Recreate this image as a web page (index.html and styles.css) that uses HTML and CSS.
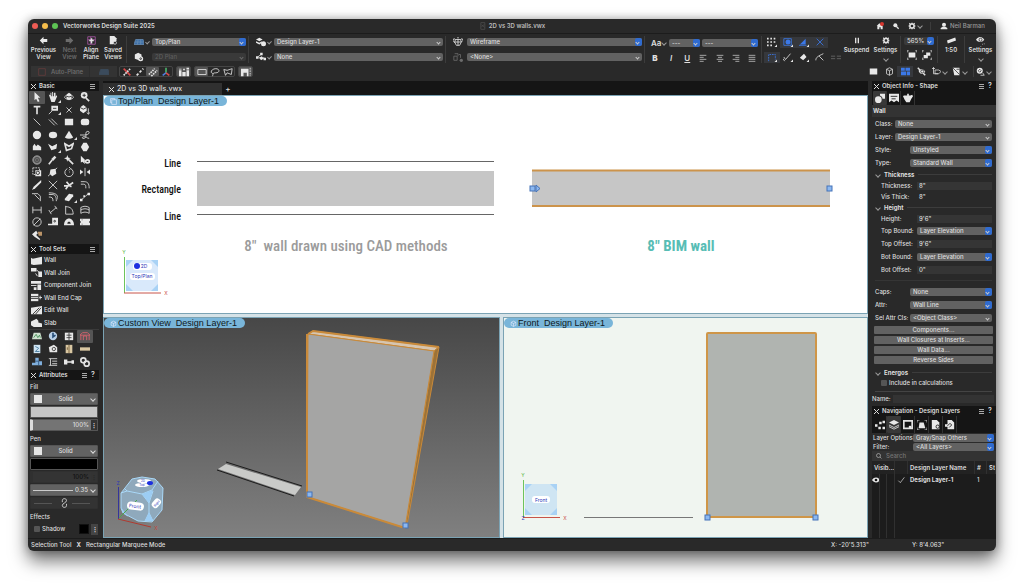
FILE: index.html
```html
<!DOCTYPE html>
<html lang="en">
<head>
    <meta charset="UTF-8">
    <meta name="viewport" content="width=device-width, initial-scale=1.0">
    <title>2D vs 3D walls.vwx</title>
    <link rel="stylesheet" href="styles.css">
</head>
<body>
<div class="window">
    <header class="titlebar">
        <div class="lights"><i class="red"></i><i class="yellow"></i><i class="green"></i></div>
        <span class="app-name">Vectorworks Design Suite 2025</span>
        <span class="doc-name"><svg viewBox="0 0 12 12"><path d="M3 1h6v10H3zM4 7l4-3M4 4l4 4"/></svg>2D vs 3D walls.vwx</span>
        <div class="title-tools">
            <button aria-label="Home"><svg viewBox="0 0 12 12"><path class="s" d="M1 6l4-4 5 4v5H7V8H5v3H2V6z"/><circle cx="9" cy="3" r="3" fill="#d8372f" stroke="none"/></svg></button>
            <button aria-label="Search"><svg viewBox="0 0 12 12"><circle class="s" cx="5" cy="5" r="3"/><path stroke-width="2" d="M6 6l4 4"/></svg></button>
            <button class="drop" aria-label="Preferences"><svg viewBox="0 0 12 12"><circle cx="6" cy="6" r="3" stroke-width="2"/><path stroke-width="2" d="M6 1v2M6 9v2M1 6h2M9 6h2M2 2l2 2M8 8l2 2M10 2L8 4M4 8l-2 2"/></svg></button>
        </div>
        <div class="user"><svg viewBox="0 0 12 12"><circle class="s" cx="6" cy="4" r="3"/><path class="s" d="M1 11V9l3-2h4l3 2v2z"/></svg>Neil Barman</div>
    </header>

    <div class="toolbar">
        <div class="group nav">
            <button><svg viewBox="0 0 12 12"><path class="s" d="M1 6l5-5v3h5v4H6v3z"/></svg>Previous<br>View</button>
            <button disabled><svg viewBox="0 0 12 12"><path class="s" d="M11 6L6 1v3H1v4h5v3z"/></svg>Next<br>View</button>
            <button><svg viewBox="0 0 12 12"><path stroke="#b45bb0" d="M1 1h10v10H1zM1 5h10M5 1v10"/><path stroke-width="2" d="M6 3v7M3 6h6"/></svg>Align<br>Plane</button>
            <button class="menu"><svg viewBox="0 0 12 12"><path class="s" d="M1 0h6l3 3v3l-4 5H1z"/><circle cx="8" cy="9" r="2" fill="#292929"/></svg>Saved<br>Views</button>
        </div>
        <div class="group pair">
            <button class="drop" aria-label="Plane"><svg viewBox="0 0 12 12"><path fill="#3d6fa8" stroke="#6489b0" d="M2 3h9l1 6H0zM1 6h10M5 3L4 9M8 3v6"/></svg></button>
            <span class="combo blue"><select aria-label="Standard view"><option>Top/Plan</option></select></span>
            <button aria-label="3D view"><svg viewBox="0 0 12 12"><path class="s" d="M1 3l4-2 4 2v3l-3 4-5-2z"/><circle class="s" cx="8" cy="8" r="3"/><circle cx="8" cy="8" r="1" stroke="#292929"/></svg></button>
            <span class="combo off"><select aria-label="Projection" disabled><option>2D Plan</option></select></span>
        </div>
        <div class="group pair">
            <button class="drop" aria-label="Layers"><svg viewBox="0 0 12 12"><path class="s" d="M0 3l4-2 4 2-4 2zM0 5l4 2 3-2v2L4 9 0 7z"/><circle class="s" cx="9" cy="8" r="3"/></svg></button>
            <span class="combo"><select aria-label="Active layer"><option>Design Layer-1</option></select></span>
            <button class="drop" aria-label="Classes"><svg viewBox="0 0 12 12"><path class="s" d="M0 5h3v3H0zM5 1h3v3H5zM4 7l3-2 2 3-3 2zM9 7h3v3H9z"/><path d="M2 6l4-3M3 7h7"/></svg></button>
            <span class="combo"><select aria-label="Active class"><option>None</option></select></span>
        </div>
        <div class="group pair render">
            <button aria-label="Render mode"><svg viewBox="0 0 12 12"><path d="M3 3h6l1 3-2 4H4L2 6zM3 3L1 2 0 4l2 3M9 3l2-1 1 2-2 2M2 6h8M6 3v7M5 1h2"/></svg></button>
            <span class="combo blue"><select aria-label="Render"><option>Wireframe</option></select></span>
            <button aria-label="Data visualization" disabled><svg viewBox="0 0 12 12"><path d="M1 5h4v5H1zM2 2h4v3M7 3h2v4"/><circle class="s" cx="10" cy="10" r="2"/></svg></button>
            <span class="combo"><select aria-label="Visualization"><option>&lt;None&gt;</option></select></span>
        </div>
        <div class="group text">
            <div class="line">
                <button class="aa drop">Aa</button>
                <span class="combo blue size"><select aria-label="Font size"><option>---</option></select></span>
                <span class="combo blue font"><select aria-label="Font"><option>---</option></select></span>
            </div>
            <div class="line spread">
                <button class="letter"><b>B</b></button>
                <button class="letter"><i>I</i></button>
                <button class="letter"><u>U</u></button>
                <button aria-label="Left"><svg viewBox="0 0 12 12"><path d="M1 2h10M1 5h6M1 8h10M1 11h6"/></svg></button>
                <button aria-label="Center"><svg viewBox="0 0 12 12"><path d="M1 2h10M3 5h6M1 8h10M3 11h6"/></svg></button>
                <button aria-label="Right"><svg viewBox="0 0 12 12"><path d="M1 2h10M5 5h6M1 8h10M5 11h6"/></svg></button>
                <button aria-label="Justify"><svg viewBox="0 0 12 12"><path d="M1 2h10M1 5h10M1 8h10M1 11h10"/></svg></button>
            </div>
        </div>
        <div class="group snaps">
            <button aria-label="Snap to grid"><svg viewBox="0 0 12 12"><path stroke-dasharray="2 2" stroke-width="2" d="M0 2h10M0 6h10M0 10h7"/><path class="s" d="M12 9v3H9z"/></svg></button>
            <button class="on" aria-label="Snap to object"><svg viewBox="0 0 12 12"><path d="M1 2h9v8H1z"/><circle class="s" cx="6" cy="6" r="3"/><path class="s w" d="M12 9v3H9z"/></svg></button>
            <button class="on" aria-label="Snap to angle"><svg viewBox="0 0 12 12"><path class="s" d="M1 9l7-7v7z"/><path d="M0 10h9"/><path class="s w" d="M12 9v3H9z"/></svg></button>
            <button class="on" aria-label="Snap to intersection"><svg viewBox="0 0 12 12"><path d="M2 2l8 8M10 2l-8 8"/></svg></button>
            <span></span>
            <button class="on" aria-label="Smart points"><svg viewBox="0 0 12 12"><path stroke-dasharray="2 1" d="M2 11V3h8v6"/><path class="s w" d="M12 9v3H9z"/></svg></button>
            <button aria-label="Snap to distance"><svg viewBox="0 0 12 12"><path d="M1 6l2 3 6-7M0 8l2 3"/><path class="s" d="M12 9v3H9z"/></svg></button>
            <button aria-label="Smart edge"><svg viewBox="0 0 12 12"><path class="s" d="M1 7l5-5 3 4-4 4zM12 9v3H9z"/></svg></button>
            <button aria-label="Tangent snap"><svg viewBox="0 0 12 12"><path d="M1 10c0-4 3-5 9-8M5 5l5 5"/></svg></button>
            <button aria-label="Working plane" disabled><svg viewBox="0 0 12 12"><path d="M0 5h5M7 5h5M0 8h5M7 8h5"/></svg></button>
        </div>
        <div class="group duo">
            <button><svg viewBox="0 0 12 12"><path stroke-width="2" d="M4 2v8M8 2v8"/></svg>Suspend</button>
            <button class="menu"><svg viewBox="0 0 12 12"><circle cx="6" cy="6" r="3" stroke-width="2"/><path stroke-width="2" d="M6 1v2M6 9v2M1 6h2M9 6h2M2 2l2 2M8 8l2 2M10 2L8 4M4 8l-2 2"/></svg>Settings</button>
        </div>
        <div class="group zoom">
            <span class="combo blue"><select aria-label="Zoom"><option>565%</option></select></span>
            <div class="line">
                <button aria-label="Fit to page"><svg viewBox="0 0 12 12"><path class="s" d="M2 3h8v6H2z"/><path d="M0 3V1h2M10 1h2v2M0 9v2h2M10 11h2V9"/></svg></button>
                <button aria-label="Fit to objects"><svg viewBox="0 0 12 12"><path class="s" d="M5 3h5v4H7v3H2V6h3z"/><path d="M0 3V1h2M10 1h2v2M0 9v2h2M10 11h2V9"/></svg></button>
            </div>
        </div>
        <div class="group single">
            <button><svg viewBox="0 0 12 12"><path class="s" d="M0 6l11-4 1 4L1 10z"/></svg>1:50</button>
        </div>
        <div class="group single">
            <button class="menu"><svg viewBox="0 0 12 12"><path class="s" d="M0 5c3-5 8-5 11 0-3 4-8 4-11 0z"/><circle cx="6" cy="5" r="2" stroke="#292929"/><path d="M8 11h1M11 10v1"/></svg>Settings</button>
        </div>
    </div>

    <div class="modes">
        <div class="auto-plane"><button disabled><svg viewBox="0 0 12 12"><path stroke="#b84a4a" d="M2 2h8v8H2z"/></svg>Auto-Plane</button><button disabled aria-label="Plane"><svg viewBox="0 0 12 12"><path fill="#4a78a8" stroke="#4a78a8" d="M2 3h9l1 6H0z"/></svg></button></div>
        <div class="mode-set">
            <button aria-label="Disable scaling"><svg viewBox="0 0 12 12"><path stroke="#d84a4a" stroke-width="2" d="M2 2l8 8"/><path stroke-dasharray="2 1" stroke-width="2" d="M2 10l8-8"/></svg></button>
            <button aria-label="Single scaling"><svg viewBox="0 0 12 12"><path stroke-dasharray="3 2" stroke-width="2" d="M2 10l8-8"/></svg></button>
            <button class="sel" aria-label="Multiple scaling"><svg viewBox="0 0 12 12"><path stroke-dasharray="2 1" stroke-width="2" d="M1 9l7-7M4 11l7-7"/></svg></button>
            <button aria-label="Axes"><svg viewBox="0 0 12 12"><path stroke="#4ab36a" stroke-width="2" d="M6 7V1"/><path stroke="#4a80e0" stroke-width="2" d="M6 7l-4 3"/><path stroke="#d84a4a" stroke-width="2" d="M6 7l4 3"/></svg></button>
        </div>
        <div class="mode-set"><button class="sel" aria-label="Wall insertion"><svg viewBox="0 0 12 12"><path class="s" d="M0 4h3v7H0zM4 6h4v5H4zM9 4h3v7H9zM0 2h3v1H0zM5 2h2v2H5zM9 1h3v2H9z"/></svg></button></div>
        <div class="mode-set">
            <button class="sel" aria-label="Rectangular marquee"><svg viewBox="0 0 12 12"><path d="M1 3h10v6H1z"/></svg></button>
            <button aria-label="Lasso marquee"><svg viewBox="0 0 12 12"><path d="M4 8C-1 7 2 2 7 2s5 5 0 5c-4 0-3 1-4 4"/></svg></button>
            <button aria-label="Polygonal marquee"><svg viewBox="0 0 12 12"><path d="M1 3l4 1 6-2-1 7-5-2-2 3z"/></svg></button>
        </div>
        <div class="mode-set"><button class="sel" aria-label="Interactive scaling"><svg viewBox="0 0 12 12"><path class="s" d="M0 2h9v9H7V7H3v4H0z"/><path stroke-dasharray="2 1" d="M11 1v10"/></svg></button></div>
        <div class="view-set">
            <button aria-label="Sheet"><svg viewBox="0 0 12 12"><path class="s" d="M1 2h10v8H1z"/></svg></button>
            <button aria-label="Perspective"><svg viewBox="0 0 12 12"><path d="M2 3l4-2 4 2v6l-4 2-4-2zM2 3l4 2 4-2M6 5v6"/></svg></button>
            <button class="on" aria-label="Multiple views"><svg viewBox="0 0 12 12"><path class="s" d="M0 1h5v4H0zM6 1h6v4H6zM0 6h7v5H0zM8 6h4v5H8z"/></svg></button>
            <button aria-label="Hide"><svg viewBox="0 0 12 12"><path stroke-width="2" d="M1 1l10 10"/><path class="s" d="M2 5c3-3 6-3 9 1-2 4-6 4-8 1z"/><circle cx="7" cy="6" r="2" stroke="#292929"/></svg></button>
            <button class="drop" aria-label="Clip cube"><svg viewBox="0 0 12 12"><path d="M0 2h4M2 0v9h6M4 4h5l3 2-3 3H4z"/></svg></button>
            <button class="drop" aria-label="Files"><svg viewBox="0 0 12 12"><path class="s" d="M1 1h9v10H3z"/><path stroke="#292929" d="M1 1l9 9M6 3h4"/></svg></button>
            <button class="drop last" aria-label="Render options"><svg viewBox="0 0 12 12"><circle class="s" cx="5" cy="5" r="4"/><path stroke="#292929" d="M3 5l2-2 2 2-2 2z"/><path d="M6 11h5M9 8l2 3"/></svg></button>
        </div>
    </div>

    <main class="workspace">
        <aside class="left">
            <section class="palette">
                <h2><i class="x"></i>Basic<span class="burger"></span></h2>
                <div class="tools basic">
                    <button class="sel" aria-label="Selection"><svg viewBox="0 0 12 12"><path class="s" d="M3 0l7 7H7l2 4-2 1-2-4-2 2z"/></svg></button>
                    <button class="more" aria-label="Pan"><svg viewBox="0 0 12 12"><path class="s" d="M2 6L1 3l2 1V1h1v4h1V0h1v5h1V1h2v5l1-2 1 1-3 7H4z"/></svg></button>
                    <button aria-label="Flyover"><svg viewBox="0 0 12 12"><path d="M4 4C-1 5 0 8 5 9M8 4c5 1 4 4-1 5"/><path class="s" d="M3 3l3-2 3 2v5l-3 2-3-2z"/><path stroke="#2a2a2a" d="M3 5l3 1 3-1"/></svg></button>
                    <button aria-label="Zoom"><svg viewBox="0 0 12 12"><circle class="s" cx="5" cy="4" r="4"/><path stroke-width="2" d="M7 7l4 4"/><path stroke="#222" d="M3 4h4M5 2v4"/></svg></button>
                    <button aria-label="Text"><svg viewBox="0 0 12 12"><path stroke-width="2" d="M2 2h8M6 2v9"/></svg></button>
                    <button class="more" aria-label="Callout"><svg viewBox="0 0 12 12"><path class="s" d="M4 1h8v6H4z"/><path d="M5 7l-4 4"/><path stroke="#222" d="M6 4h4"/></svg></button>
                    <button aria-label="Locus"><svg viewBox="0 0 12 12"><path d="M3 3l6 6M9 3L3 9"/></svg></button>
                    <button aria-label="Symbol"><svg viewBox="0 0 12 12"><path class="s" d="M0 3l4-3 4 3v4L4 10 0 7z"/><path stroke="#222" d="M0 3l4 2 4-2"/><path d="M10 4v7M8 9l2 2 2-2"/></svg></button>
                    <button aria-label="Line"><svg viewBox="0 0 12 12"><path d="M2 2l8 8"/></svg></button>
                    <button aria-label="Double line"><svg viewBox="0 0 12 12"><path d="M1 3l7 7M4 2l7 7"/></svg></button>
                    <button aria-label="Rectangle"><svg viewBox="0 0 12 12"><path class="s" d="M1 2h10v8H1z"/></svg></button>
                    <button aria-label="Rounded rectangle"><svg viewBox="0 0 12 12"><rect class="s" x="1" y="2" width="10" height="8" rx="3"/></svg></button>
                    <button aria-label="Circle"><svg viewBox="0 0 12 12"><circle class="s" cx="6" cy="6" r="5"/></svg></button>
                    <button aria-label="Oval"><svg viewBox="0 0 12 12"><ellipse class="s" cx="6" cy="6" rx="5" ry="4"/></svg></button>
                    <button class="more" aria-label="Arc"><svg viewBox="0 0 12 12"><path class="s" d="M1 9l5-8 5 8c-3 2-7 2-10 0z"/></svg></button>
                    <button aria-label="Freehand"><svg viewBox="0 0 12 12"><path d="M0 6h5c3 0 6-1 6-3s-4-2-4 1 1 5-2 6-3-2 0-2 3 2 6 2"/></svg></button>
                    <button aria-label="Polyline"><svg viewBox="0 0 12 12"><path class="s" d="M1 10V5l2-3 2 3 2-2 4 3v4z"/></svg></button>
                    <button class="more" aria-label="Polygon"><svg viewBox="0 0 12 12"><path class="s" d="M0 2l5 3 6-3-1 6-6 2z"/></svg></button>
                    <button aria-label="Double polygon"><svg viewBox="0 0 12 12"><path stroke-width="2" d="M1 2l5 3 5-3-2 6-6 2z"/></svg></button>
                    <button aria-label="Regular polygon"><svg viewBox="0 0 12 12"><path class="s" d="M4 1h4l3 5-3 5H4L1 6z"/></svg></button>
                    <button aria-label="Spiral"><svg viewBox="0 0 12 12"><circle cx="6" cy="6" r="5" fill="#777" stroke="#aaa"/><circle cx="6" cy="6" r="3" stroke="#444"/><circle cx="6" cy="6" r="1" stroke="#444"/></svg></button>
                    <button aria-label="Eyedropper"><svg viewBox="0 0 12 12"><path stroke-width="3" d="M5 6l4-4"/><path stroke-width="2" d="M1 11l4-5"/></svg></button>
                    <button aria-label="Magic wand"><svg viewBox="0 0 12 12"><path class="s" d="M4 0l1 3 3 1-3 1-1 3-1-3-3-1 3-1z"/><path stroke-width="2" d="M5 5l6 6"/></svg></button>
                    <button aria-label="Select similar"><svg viewBox="0 0 12 12"><path class="s" d="M1 1l6 6H5l1 4-3-3-2 1z"/><path stroke-width="2" d="M6 8c2-3 4-3 6 0-2 2-4 2-6 0z"/></svg></button>
                    <button aria-label="Clip"><svg viewBox="0 0 12 12"><path stroke-dasharray="2 1" d="M1 1h8v8H1z"/><path class="s" d="M4 4h7v7H4z"/><circle cx="7" cy="7" r="2" stroke="#222"/></svg></button>
                    <button aria-label="Reshape"><svg viewBox="0 0 12 12"><path class="s" d="M3 3l6-1 1 6-5 3-3-3z"/><path d="M0 11L11 1"/></svg></button>
                    <button aria-label="Rotate"><svg viewBox="0 0 12 12"><path d="M4 2a5 5 0 1 0 4 0M6 0l2 2-2 2M6 6h1"/></svg></button>
                    <button aria-label="Mirror"><svg viewBox="0 0 12 12"><path class="s" d="M0 3l4 3-4 3zM12 3L8 6l4 3z"/><path d="M6 1v10"/></svg></button>
                    <button aria-label="Split"><svg viewBox="0 0 12 12"><path class="s" d="M11 0L2 8l-2 4 4-2 7-7z"/></svg></button>
                    <button aria-label="Connect"><svg viewBox="0 0 12 12"><path d="M1 1l10 10M11 1L1 11"/></svg></button>
                    <button aria-label="Trim"><svg viewBox="0 0 12 12"><path stroke-width="2" d="M0 7h5l6-4M3 2l4 5 2 1M2 11l3-4"/></svg></button>
                    <button aria-label="Fillet"><svg viewBox="0 0 12 12"><path d="M1 2h4c4 0 6 2 6 8M1 5h3c3 0 3 2 3 5"/></svg></button>
                    <button aria-label="Chamfer"><svg viewBox="0 0 12 12"><path d="M0 2h7l3 3v6M3 3l6 6"/></svg></button>
                    <button aria-label="Offset"><svg viewBox="0 0 12 12"><path d="M1 3h4c4 0 5 3 5 8M1 6c4 0 5 1 5 5M1 1c8 0 11 2 11 8"/></svg></button>
                    <button class="more" aria-label="Eraser"><svg viewBox="0 0 12 12"><path class="s" d="M1 8l5-6 5 1v2L6 11l-5-1z"/></svg></button>
                    <button aria-label="Move by points"><svg viewBox="0 0 12 12"><path d="M1 10l9-8"/><path class="s" d="M0 8h3v3H0zM9 1h3v3H9zM4 4h2v2H4z"/></svg></button>
                    <button aria-label="Dimension"><svg viewBox="0 0 12 12"><path d="M1 2v8M11 2v8M1 6h10"/></svg></button>
                    <button aria-label="Angled dimension"><svg viewBox="0 0 12 12"><path d="M1 6l3 5M8 1l3 4M3 9l7-6"/></svg></button>
                    <button aria-label="Angular dimension"><svg viewBox="0 0 12 12"><path d="M2 1v10h9c0-6-3-9-9-9"/></svg></button>
                    <button aria-label="Arc length"><svg viewBox="0 0 12 12"><path d="M1 3c3-2 7-2 10 0v7c-3-2-7-2-10 0zM1 6c3-2 7-2 10 0"/></svg></button>
                    <button aria-label="Diameter"><svg viewBox="0 0 12 12"><circle cx="6" cy="6" r="5"/><path d="M2 10l8-8"/></svg></button>
                    <button aria-label="Tape measure"><svg viewBox="0 0 12 12"><path class="s" d="M5 1h7v9H0V8h5z"/><circle cx="8" cy="5" r="1" stroke="#222"/></svg></button>
                    <button aria-label="Protractor"><svg viewBox="0 0 12 12"><path class="s" d="M0 10c0-11 12-11 12 0z"/><path fill="#2a2a2a" stroke="none" d="M4 8c0-3 4-3 4 0z"/></svg></button>
                    <button aria-label="Stamp"><svg viewBox="0 0 12 12"><path class="s" d="M0 2h12v8H0z"/><path fill="#2a2a2a" stroke="none" d="M0 5h1v2H0zM11 5h1v2h-1zM2 3h1v1H2zM2 8h1v1H2z"/></svg></button>
                    <button aria-label="Attribute mapping"><svg viewBox="0 0 12 12"><path class="s" d="M0 5l5-4 2 3-4 4zM3 8l2-2 5 5-1 1z"/><path fill="#bb9468" stroke="none" d="M7 2h5v5H8z"/></svg></button>
                </div>
            </section>
            <section class="palette">
                <h2><i class="x"></i>Tool Sets<span class="burger"></span></h2>
                <div class="toolset">
                    <button><svg viewBox="0 0 12 12"><path class="s" d="M0 3l2 1 10-2v8l-9 1-3-1z"/></svg>Wall</button>
                    <button><svg viewBox="0 0 12 12"><path class="s" d="M0 1h6v4H0zM8 5h4v6H8z"/><path d="M6 3l4 4M5 7l2 3"/></svg>Wall Join</button>
                    <button><svg viewBox="0 0 12 12"><path class="s" d="M0 1h11v3H0zM7 5h4v6H7zM3 8h3v3H3z"/><path d="M0 6h6"/></svg>Component Join</button>
                    <button><svg viewBox="0 0 12 12"><path class="s" d="M0 2h8v8H0z"/><path stroke="#333" d="M0 5h8M0 7h8"/><path d="M9 6h3M10 4v4"/></svg>Wall End Cap</button>
                    <button><svg viewBox="0 0 12 12"><path class="s" d="M0 3l12-2v9H0z"/><path stroke="#333" d="M2 10l7-7M5 10l6-7"/></svg>Edit Wall</button>
                    <button><svg viewBox="0 0 12 12"><path class="s" d="M0 5l6-3 2 2v2l4 1v4H3L0 9z"/></svg>Slab</button>
                </div>
                <div class="tools sets">
                    <button aria-label="Site"><svg viewBox="0 0 12 12"><path fill="#cfe0cf" stroke="none" d="M2 2h8l2 8H0z"/><path stroke="#3d8a50" d="M2 8l3-4 2 4 2-3 1 3"/></svg></button>
                    <button aria-label="Spotlight"><svg viewBox="0 0 12 12"><circle cx="6" cy="6" r="5" fill="#b7cfe6" stroke="none"/><path stroke="#274e78" stroke-width="2" d="M6 2v5l3-2"/></svg></button>
                    <button aria-label="Furniture"><svg viewBox="0 0 12 12"><path class="s" d="M1 2h10v9H1z"/><path stroke="#333" d="M6 2v9M3 5h6M3 8h6"/></svg></button>
                    <button class="sel" aria-label="Building shell"><svg viewBox="0 0 12 12"><path stroke="#e06470" d="M0 5l3-3h6l3 3M1 5v6M4 11V6h4v5M11 5v6M0 5h12"/></svg></button>
                    <button aria-label="Detailing"><svg viewBox="0 0 12 12"><path fill="#cfe4f2" stroke="none" d="M2 1h8v10H2z"/><path stroke="#3b7198" d="M4 3l4 2-4 4h5"/></svg></button>
                    <button aria-label="Camera"><svg viewBox="0 0 12 12"><path class="s" d="M1 4l6-3 4 3v6H2z"/><circle cx="7" cy="6" r="2" stroke="#333"/></svg></button>
                    <button aria-label="Doors"><svg viewBox="0 0 12 12"><path fill="#d9c7a2" stroke="none" d="M2 1h8v10H2z"/><path stroke="#6b5433" d="M6 1v10M4 4v3"/></svg></button>
                    <button aria-label="Framing"><svg viewBox="0 0 12 12"><path fill="#d9c7a2" stroke="none" d="M0 4h12v4H0z"/></svg></button>
                    <button aria-label="Piping"><svg viewBox="0 0 12 12"><path fill="#7faedb" stroke="none" d="M4 1h4v4h4v5H0V7h4z"/><path stroke="#2a4f78" d="M4 5h4v5"/></svg></button>
                    <button aria-label="Steel"><svg viewBox="0 0 12 12"><path d="M1 2h10M1 10h10M3 2v8M5 5h6M5 8h6"/></svg></button>
                    <button aria-label="Fasteners"><svg viewBox="0 0 12 12"><path class="s" d="M0 3h4v6H0zM4 5h5v2H4zM9 4h3v4H9z"/></svg></button>
                    <button aria-label="Machine"><svg viewBox="0 0 12 12"><circle cx="4" cy="4" r="3" stroke-width="2"/><circle cx="8" cy="8" r="3" stroke-width="2"/></svg></button>
                </div>
            </section>
            <section class="palette attrs">
                <h2><i class="x"></i>Attributes<span class="burger"></span><em>?</em></h2>
                <h3>Fill</h3>
                <div class="attr style"><i></i><select aria-label="Fill style"><option>Solid</option></select></div>
                <button class="attr color light" aria-label="Fill color"></button>
                <div class="attr opacity"><span>100%</span><button aria-label="Fill options">⋮</button></div>
                <h3>Pen</h3>
                <div class="attr style"><i></i><select aria-label="Pen style"><option>Solid</option></select></div>
                <button class="attr color dark" aria-label="Pen color"></button>
                <div class="attr opacity off"><span>100%</span><button aria-label="Pen options" disabled>⋮</button></div>
                <div class="attr weight"><hr><select aria-label="Line thickness"><option>0.35</option></select></div>
                <div class="attr markers"><hr><svg viewBox="0 0 12 12"><path d="M4 5V3c0-3 5-3 5 0S4 6 4 9s5 3 5 0V7"/></svg><hr></div>
                <h3>Effects</h3>
                <div class="shadow"><label><input type="checkbox">Shadow</label><button class="swatch" aria-label="Shadow color"></button><button class="dots" aria-label="Shadow options">⋮</button></div>
            </section>
        </aside>

        <section class="document">
            <div class="tabs"><button class="tab"><i class="x"></i>2D vs 3D walls.vwx</button><button class="add" aria-label="New tab">+</button></div>
            <div class="viewports">
                <div class="viewport plan">
                    <span class="tag"><svg viewBox="0 0 12 12"><path d="M3 3h8v8H3zM1 1h7v2M1 1v7h2"/></svg>Top/Plan&nbsp; Design Layer-1</span>
                    <svg class="drawing" viewBox="0 0 765 219">
                        <g stroke="#666"><path d="M94 66.5h297M94 119.5h297"/></g>
                        <rect x="94" y="76" width="297" height="35" fill="#c6c6c6"/>
                        <g class="din" text-anchor="end"><text x="78" y="72">Line</text><text x="78" y="98">Rectangle</text><text x="78" y="125">Line</text></g>
                        <text class="din caption" x="243" y="156" text-anchor="middle">8"&#160; wall drawn using CAD methods</text>
                        <rect x="429" y="75" width="298" height="36" fill="#c6c6c6"/>
                        <path d="M429 75.5h298M429 111h298" stroke="#cc934b" stroke-width="2"/>
                        <g class="handle"><rect x="427" y="91" width="5" height="5"/><path d="M433 90l4 3.5-4 3.5z"/><rect x="724" y="91" width="5" height="5"/></g>
                        <text class="din caption bim" x="578" y="156" text-anchor="middle">8" BIM wall</text>
                        <rect x="23" y="165" width="32" height="31" fill="#a9d2f5"/>
                        <path d="M30 165h18l7 7v17l-7 7H30l-7-7v-17z" fill="#d9e9fb"/>
                        <path d="M21.5 162v36" stroke="#6cc45c"/><path d="M21 198h37" stroke="#c8544a"/>
                        <rect x="30" y="168" width="19" height="7" rx="3" fill="#fff"/><rect x="27" y="178" width="25" height="7" rx="3" fill="#fff"/>
                        <circle cx="34" cy="171" r="3" fill="#1c2fe0"/>
                        <g class="cube-text"><text x="41" y="173" text-anchor="middle">2D</text><text x="39" y="183" text-anchor="middle">Top/Plan</text><text x="21" y="159" text-anchor="middle" class="ay">Y</text><text x="63" y="200" text-anchor="middle" class="ax">X</text></g>
                    </svg>
                </div>
                <div class="viewport custom">
                    <span class="tag"><svg viewBox="0 0 12 12"><path d="M2 4l4-2 4 2v5l-4 2-4-2zM2 4l4 2 4-2M6 6v5"/></svg>Custom View&nbsp; Design Layer-1</span>
                    <svg class="drawing" viewBox="0 0 397 221">
                        <g stroke="#c98a3a" stroke-linejoin="round">
                            <path fill="#d6c5b0" d="M205 17l5-3 126 16-5 4z"/>
                            <path fill="#9c7238" d="M331 34l5-4-32 178-2 3z"/>
                            <path fill="#a5a5a4" d="M205 17l126 17-29 177-98-31z"/>
                            <path stroke-width="2" d="M205 17l5-3 126 16M204 17v163l98 31"/>
                        </g>
                        <path fill="#c9cac8" d="M123 147l75 23-6 8-77-26z"/>
                        <path stroke="#1c1c1c" d="M123 145l76 24M114 153l77 26"/>
                        <g class="handle"><rect x="204" y="175" width="5" height="5"/><rect x="300" y="206" width="5" height="5"/></g>
                        <path d="M15.5 170v32" stroke="#34349c"/>
                        <path fill="#8fa9bc" stroke="#a9d8f8" d="M29 162l10-2 13 2 8 9-1 22-10 12-14-1-15-8-2-5v-15z"/>
                        <path stroke="#a9d8f8" d="M18 176l6-2 15 3 10-4 6-9M24 174l-3-3M39 177l7 9 4-12M46 186v10M46 196l-4 8M46 196l4 8"/>
                        <path fill="#9ccdf4" d="M39 177l11-4-4 13zM18 190l7 10-5-4zM42 204l4-9 4 9z"/>
                        <path stroke="#4ba94c" d="M16 201l18-18"/><path stroke="#b03a30" d="M15 202l33 8"/>
                        <g fill="#fff"><ellipse cx="39" cy="168" rx="7" ry="2"/><ellipse cx="41" cy="164" rx="7" ry="2"/><rect x="24" y="185" width="17" height="8" rx="4" transform="rotate(7 32 189)"/><rect x="48" y="183" width="10" height="7" rx="3" transform="rotate(-50 53 186)"/></g>
                        <ellipse cx="47" cy="166" rx="3" ry="2" fill="#1c2fe0"/>
                        <g class="cube-text"><text x="32" y="191" text-anchor="middle" transform="rotate(7 32 189)">Front</text><text x="15" y="168" text-anchor="middle">Z</text><text x="53" y="213" text-anchor="middle" class="ax">X</text><text class="tiny" x="39" y="169" text-anchor="middle">Top</text><text class="tiny" x="40" y="165" text-anchor="middle">2D</text><text class="tiny" x="53" y="188" text-anchor="middle" transform="rotate(-50 53 186)">Right</text></g>
                    </svg>
                </div>
                <div class="viewport front">
                    <span class="tag"><svg viewBox="0 0 12 12"><path d="M2 4l4-2 4 2v5l-4 2-4-2zM2 4l4 2 4-2M6 6v5"/></svg>Front&nbsp; Design Layer-1</span>
                    <svg class="drawing" viewBox="0 0 365 221">
                        <rect x="204" y="16" width="109" height="184" rx="1" fill="#b0b4b0" stroke="#cf9648" stroke-width="2"/>
                        <path d="M81 200.5h109" stroke="#777"/>
                        <g class="handle"><rect x="202" y="198" width="5" height="5"/><rect x="310" y="198" width="5" height="5"/></g>
                        <rect x="22" y="167" width="32" height="31" fill="#a9d2f5"/>
                        <path d="M29 167h18l7 7v17l-7 7H29l-7-7v-17z" fill="#cfe5f3"/>
                        <path d="M20.5 163v37" stroke="#6cc45c"/><path d="M20 200.5h37" stroke="#c8544a"/>
                        <rect x="29" y="179" width="18" height="7" rx="3" fill="#fff"/>
                        <g class="cube-text"><text x="38" y="185" text-anchor="middle">Front</text><text x="20" y="203" text-anchor="middle">Z</text><text x="20" y="160" text-anchor="middle" class="ay">Y</text><text x="62" y="203" text-anchor="middle" class="ax">X</text></g>
                    </svg>
                </div>
            </div>
        </section>

        <aside class="right">
            <section class="palette info">
                <h2><i class="x"></i>Object Info - Shape<span class="burger"></span><em>?</em></h2>
                <div class="ptabs">
                    <button class="sel" aria-label="Shape"><svg viewBox="0 0 12 12"><circle class="s" cx="4" cy="8" r="4"/><path class="s" d="M6 1h6v6H9c0-2-1-3-3-4z"/></svg></button>
                    <button aria-label="Data"><svg viewBox="0 0 12 12"><path class="s" d="M0 1h12v10l-3-2-3 2-3-2-3 2z"/><path stroke="#111" d="M2 4h8M3 7h5"/></svg></button>
                    <button aria-label="Render"><svg viewBox="0 0 12 12"><path class="s" d="M3 3h6l2-1 1 2-2 3-2 4H4L2 8 0 4l1-1zM5 1h2v2H5z"/></svg></button>
                </div>
                <h3>Wall</h3>
                <div class="fields">
                    <div class="row near"><label for="cls">Class:</label><span class="combo"><select id="cls"><option>None</option></select></span></div>
                    <div class="row near"><label for="lay">Layer:</label><span class="combo"><select id="lay"><option>Design Layer-1</option></select></span></div>
                    <div class="row mid"><label for="sty">Style:</label><span class="combo blue"><select id="sty"><option>Unstyled</option></select></span></div>
                    <div class="row mid"><label for="typ">Type:</label><span class="combo blue"><select id="typ"><option>Standard Wall</option></select></span></div>
                    <h4>Thickness</h4>
                    <div class="row far low"><label for="thk">Thickness:</label><input id="thk" value='8"'></div>
                    <div class="row far low"><span>Vis Thick:</span><span class="plain">8"</span></div>
                    <h4>Height</h4>
                    <div class="row far low"><label for="hgt">Height:</label><input id="hgt" value="9'6&quot;"></div>
                    <div class="row far"><label for="tb">Top Bound:</label><span class="combo blue"><select id="tb"><option>Layer Elevation</option></select></span></div>
                    <div class="row far"><label for="to">Top Offset:</label><input id="to" value="9'6&quot;"></div>
                    <div class="row far"><label for="bb">Bot Bound:</label><span class="combo blue"><select id="bb"><option>Layer Elevation</option></select></span></div>
                    <div class="row far"><label for="bo">Bot Offset:</label><input id="bo" value='0"'></div>
                    <hr>
                    <div class="row mid"><label for="cap">Caps:</label><span class="combo blue"><select id="cap"><option>None</option></select></span></div>
                    <div class="row mid"><label for="att">Attr:</label><span class="combo blue"><select id="att"><option>Wall Line</option></select></span></div>
                    <div class="row mid"><label for="sac">Sel Attr Cls:</label><span class="combo"><select id="sac"><option>&lt;Object Class&gt;</option></select></span></div>
                    <div class="pushes"><button>Components...</button><button>Wall Closures at Inserts...</button><button>Wall Data...</button><button>Reverse Sides</button></div>
                    <h4>Energos</h4>
                    <label class="check"><input type="checkbox">Include in calculations</label>
                </div>
                <div class="name"><label for="nm">Name:</label><input id="nm"></div>
            </section>
            <section class="palette nav-layers">
                <h2><i class="x"></i>Navigation - Design Layers<span class="burger"></span><em>?</em></h2>
                <div class="ptabs">
                    <button aria-label="Classes"><svg viewBox="0 0 12 12"><path class="s" d="M0 5h3v3H0zM5 2h3v3H5zM4 8h3v3H4zM9 1h3v3H9zM9 8h3v3H9z"/></svg></button>
                    <button class="sel" aria-label="Design layers"><svg viewBox="0 0 12 12"><path class="s" d="M6 0l6 3-6 3-6-3z"/><path d="M0 6l6 3 6-3M0 8l6 3 6-3"/></svg></button>
                    <button aria-label="Sheet layers"><svg viewBox="0 0 12 12"><path stroke-width="2" d="M1 1h10v9H1z"/><path class="s" d="M7 7h3v3H7z"/></svg></button>
                    <button aria-label="Viewports"><svg viewBox="0 0 12 12"><path d="M0 3V0h3M9 0h3v3M0 9v3h3M9 12h3V9"/><path class="s" d="M3 3h5l2 7H2z"/></svg></button>
                    <button aria-label="Saved views"><svg viewBox="0 0 12 12"><path class="s" d="M1 0h6l3 3v8H1z"/><circle cx="8" cy="8" r="2" stroke="#111"/></svg></button>
                    <button aria-label="References"><svg viewBox="0 0 12 12"><path class="s" d="M3 0h5l3 3v8H3V8H0V5h3z"/><path stroke="#111" d="M3 7l3-3 2 2-3 3"/></svg></button>
                </div>
                <div class="option"><label for="lo">Layer Options:</label><span class="combo blue"><select id="lo"><option>Gray/Snap Others</option></select></span></div>
                <div class="option"><label for="fl">Filter:</label><span class="combo blue"><select id="fl"><option>&lt;All Layers&gt;</option></select></span></div>
                <div class="search"><svg viewBox="0 0 12 12"><circle cx="5" cy="5" r="4"/><path d="M8 8l3 3"/></svg><input aria-label="Search" placeholder="Search"></div>
                <table>
                    <thead><tr><th colspan="3">Visib...</th><th></th><th>Design Layer Name</th><th>#</th><th>St</th></tr></thead>
                    <tbody>
                        <tr><td><svg viewBox="0 0 12 12"><path class="s" d="M0 6c3-5 9-5 12 0-3 5-9 5-12 0z"/><circle cx="6" cy="6" r="2" fill="#111" stroke="none"/></svg></td><td></td><td></td><td><svg viewBox="0 0 12 12"><path d="M2 7l3 3 6-8"/></svg></td><td><b>Design Layer-1</b></td><td>1</td><td></td></tr>
                        <tr class="rest"><td></td><td></td><td></td><td></td><td></td><td></td><td></td></tr>
                    </tbody>
                </table>
            </section>
        </aside>
    </main>

    <footer class="status"><span>Selection Tool</span><b>X</b><span>Rectangular Marquee Mode</span><span class="pos first">X: -20'5.313"</span><span class="pos">Y: 8'4.063"</span></footer>
</div>
</body>
</html>
```
FILE: styles.css
```css
:root {
    --chrome: #292929;
    --panel: #2b2b2b;
    --dark: #151515;
    --control: #626262;
    --line: #3c3c3c;
    --text: #dedede;
    --blue: #2f6bd0;
}
* {
    box-sizing: border-box;
}
body {
    margin: 0;
    padding: 19px 28px 37px;
    min-height: 100vh;
    background: #fff;
    color: var(--text);
    font: 500 6px/8px Inter, "Liberation Sans", sans-serif;
    display: flex;
    overflow: hidden;
}
button, input, select {
    font: inherit;
    color: inherit;
    margin: 0;
    padding: 0;
    border: 0;
    background: none;
    border-radius: 0;
    min-width: 0;
}
h2, h3, h4, hr {
    margin: 0;
    font-size: inherit;
}
svg {
    width: 10px;
    height: 10px;
    fill: none;
    stroke: #e2e2e2;
    flex: none;
    display: block;
}
.s {
    fill: #e8e8e8;
    stroke: none;
}
.window {
    flex: 1;
    min-width: 0;
    display: flex;
    flex-direction: column;
    background: var(--chrome);
    border-radius: 6px;
    overflow: hidden;
    box-shadow: 0 10px 18px rgba(0,0,0,0.55), 0 0 10px rgba(0,0,0,0.3);
}
/* title bar */
.titlebar {
    height: 15px;
    display: flex;
    align-items: center;
    border-bottom: 1px solid #1c1c1c;
    position: relative;
}
.titlebar svg {
    width: 8px;
    height: 8px;
}
.lights {
    display: flex;
    gap: 4px;
    padding: 0 4px;
}
.lights i {
    width: 6px;
    height: 6px;
    border-radius: 50%;
}
.red { background: #ee5c54; }
.yellow { background: #f5bd4b; }
.green { background: #5ec454; }
.app-name {
    font-weight: 600;
    margin-left: 1px;
}
.doc-name {
    position: absolute;
    left: 50%;
    transform: translateX(-50%);
    display: flex;
    gap: 2px;
    font-weight: 600;
    color: #bbb;
}
.doc-name svg {
    stroke: #555;
}
.title-tools {
    margin-left: auto;
    display: flex;
    gap: 8px;
    padding-right: 8px;
}
.user {
    width: 66px;
    padding-left: 9px;
    display: flex;
    gap: 2px;
    align-items: center;
    color: #999;
    border-left: 1px solid var(--line);
}
/* toolbar */
.drop {
    display: flex;
    align-items: center;
    gap: 2px;
}
.drop::after, .menu::after {
    content: "";
    width: 3px;
    height: 3px;
    border: solid #999;
    border-width: 0 1px 1px 0;
    transform: rotate(45deg);
}
.toolbar {
    display: grid;
    grid-template-columns: 99px 122fr 197fr 199fr 117px 80px 59px 37px 27px 31px;
    height: 31px;
}
.group {
    min-width: 0;
    margin: 2px 0;
    border-right: 1px solid var(--line);
}
.group:last-child, .snaps {
    border: 0;
}
.nav, .duo, .single {
    display: grid;
    grid-template-columns: 31px 21px 22px 22px;
    font-weight: 600;
}
.duo {
    grid-template-columns: 1fr 1fr;
}
.single {
    grid-template-columns: 1fr;
}
.nav button, .duo button, .single button {
    display: flex;
    flex-direction: column;
    align-items: center;
    white-space: nowrap;
    line-height: 7px;
}
.nav svg, .duo svg, .single svg {
    width: 9px;
    height: 9px;
    margin-bottom: 1px;
}
.duo svg {
    width: 8px;
}
button:disabled {
    opacity: 0.35;
}
.duo .menu::after, .single .menu::after {
    margin-top: 4px;
}
.nav .menu::after {
    display: none;
}
.pair {
    display: grid;
    grid-template-columns: 15px 1fr;
    grid-template-rows: 10px 10px;
    gap: 5px 3px;
    padding: 0 2px 0 7px;
    align-content: center;
    align-items: center;
}
.pair.render {
    grid-template-columns: 11px 1fr;
}
.combo {
    position: relative;
    display: flex;
    height: 8px;
    min-width: 0;
}
.combo select {
    appearance: none;
    width: 100%;
    height: 8px;
    padding: 0 8px 0 3px;
    background: var(--control);
    border-radius: 2px;
    line-height: 8px;
}
.combo::before {
    content: "";
    position: absolute;
    right: 0;
    top: 0;
    width: 7px;
    height: 8px;
    border-radius: 2px;
}
.combo::after {
    content: "";
    position: absolute;
    right: 3px;
    top: 3px;
    width: 2px;
    height: 2px;
    border: solid #ccc;
    border-width: 0 1px 1px 0;
    transform: rotate(45deg);
}
.combo.blue::before {
    background: var(--blue);
}
.combo.off {
    opacity: 0.4;
}
.line {
    display: flex;
    align-items: center;
}
.text {
    padding: 1px 3px 0 6px;
    display: flex;
    flex-direction: column;
    justify-content: center;
    gap: 5px;
}
.text .line {
    height: 10px;
    gap: 2px;
}
.aa {
    font-size: 8px;
    font-weight: 600;
    width: 16px;
    gap: 1px;
}
.combo.size {
    width: 31px;
}
.combo.font {
    flex: 1;
}
.text .spread {
    justify-content: space-between;
    padding-right: 2px;
}
.letter {
    width: 8px;
    font-size: 8px;
    font-weight: 600;
}
.text svg {
    width: 8px;
    height: 8px;
}
.snaps {
    display: grid;
    grid-template-columns: repeat(5, 16px);
    grid-template-rows: 11px 11px;
    row-gap: 4px;
    padding-left: 2px;
    align-content: center;
}
.snaps button, .view-set button {
    display: flex;
    align-items: center;
    justify-content: center;
}
.on {
    background: #36383c;
}
.on svg {
    stroke: #3b78e8;
}
.on .s {
    fill: #3b78e8;
}
.on .w {
    fill: #e8e8e8;
}
.zoom {
    padding: 1px 3px 0;
}
.zoom .combo select {
    background: #3a3a3a;
}
.zoom .line {
    justify-content: space-around;
    margin-top: 5px;
}
/* mode bar */
.modes {
    height: 16px;
    padding: 1px 3px 4px;
    display: flex;
    gap: 2px;
}
.auto-plane {
    display: flex;
    background: #333;
    width: 86px;
}
.auto-plane button {
    width: 27px;
    display: flex;
    align-items: center;
    justify-content: center;
    gap: 4px;
}
.auto-plane button:first-child {
    flex: 1;
    border-right: 1px solid #222;
}
.mode-set {
    display: flex;
    border: 1px solid #454545;
    border-radius: 2px;
    margin-right: 1px;
}
.mode-set button {
    width: 13px;
    display: flex;
    align-items: center;
    justify-content: center;
}
.sel {
    background: #555;
    border-radius: 1px;
}
.view-set {
    margin-left: auto;
    display: flex;
}
.view-set button {
    width: 16px;
}
.view-set .drop {
    width: 20px;
}
.view-set .last {
    margin-left: 4px;
    border-left: 1px solid var(--line);
}
.view-set svg {
    width: 9px;
    height: 9px;
}
/* palettes */
.workspace {
    flex: 1;
    display: grid;
    grid-template-columns: 75px 1fr 128px;
}
.left {
    padding-right: 4px;
    background: var(--chrome);
}
.palette h2 {
    display: flex;
    align-items: center;
    height: 10px;
    padding: 0 4px 0 2px;
    background: var(--dark);
    font-weight: 600;
}
.x {
    width: 5px;
    height: 5px;
    margin-right: 3px;
    flex: none;
    background: linear-gradient(45deg, transparent 43%, #ddd 43%, #ddd 57%, transparent 57%), linear-gradient(-45deg, transparent 43%, #ddd 43%, #ddd 57%, transparent 57%);
}
.burger {
    width: 5px;
    height: 5px;
    margin-left: auto;
    border: solid #aaa;
    border-width: 1px 0;
    background: linear-gradient(#aaa, #aaa) center / 5px 1px no-repeat;
}
.palette em {
    font-style: normal;
    font-size: 7px;
    width: 4px;
    margin-left: 4px;
}
.tools {
    display: grid;
    grid-template-columns: repeat(4, 16px);
    grid-auto-rows: 1fr;
}
.tools button {
    display: flex;
    align-items: center;
    justify-content: center;
    position: relative;
}
.basic {
    height: 150px;
    margin-bottom: 3px;
}
.more::after {
    content: "";
    position: absolute;
    right: 0;
    bottom: 1px;
    border: solid transparent;
    border-width: 3px 0 0 3px;
    border-bottom: 0 solid;
    border-right: 3px solid #ddd;
}
.left .palette {
    padding: 0 0 0 1px;
}
.toolset {
    display: grid;
    grid-auto-rows: 1fr;
    height: 75px;
}
.toolset button {
    display: flex;
    align-items: center;
    gap: 2px;
    padding-left: 2px;
}
.toolset svg {
    width: 11px;
    height: 11px;
}
.sets {
    height: 39px;
    margin-bottom: 2px;
    border-top: 1px solid #3a3a3a;
}
.attrs h3 {
    height: 13px;
    line-height: 13px;
    padding-left: 1px;
    font-weight: 500;
}
.attr {
    display: flex;
    align-items: center;
    width: 68px;
    height: 12px;
    margin: 0 0 1px 1px;
    background: var(--control);
    border: 1px solid #555;
    border-radius: 1px;
}
.attr.style i {
    width: 8px;
    height: 8px;
    margin-left: 3px;
    background: #e6e6e6;
}
.attr select {
    appearance: none;
    height: 10px;
}
.style select {
    flex: 1;
    text-align: center;
    text-align-last: center;
}
.attr.style::after, .weight::after {
    content: "";
    width: 3px;
    height: 3px;
    margin: 0 2px;
    border: solid #ddd;
    border-width: 0 1px 1px 0;
    transform: rotate(45deg);
}
.attr.light { background: #c6c6c6; }
.attr.dark { background: #000; }
.opacity {
    justify-content: flex-end;
    border-left: 3px solid #ddd;
    background: #747474;
}
.opacity button {
    width: 6px;
    height: 10px;
    margin-left: 2px;
    background: #333;
    font-weight: 700;
}
.attr.off {
    background: #343434;
    border-color: #303030;
    color: #111;
}
.weight select {
    width: 14px;
}
.weight hr, .markers hr {
    flex: 1;
    margin: 0 2px;
    border: 0;
    border-top: 1px solid #ccc;
}
.attr.markers {
    background: #333;
    border-color: #303030;
}
.markers hr {
    border-color: #555;
    margin: 0 7px 0 3px;
}
.shadow {
    display: flex;
    align-items: center;
    height: 12px;
    padding-left: 5px;
    width: 69px;
}
.shadow label, .check {
    display: flex;
    align-items: center;
    gap: 2px;
    flex: 1;
}
input[type=checkbox] {
    appearance: none;
    width: 6px;
    height: 6px;
    background: #555;
    border-radius: 1px;
}
.swatch {
    width: 10px;
    height: 10px;
    background: #000;
    border: 1px solid #111;
}
.dots {
    width: 7px;
    height: 11px;
    margin-left: 2px;
    background: #444;
    font-weight: 700;
}
/* document */
.document {
    background: var(--dark);
    min-width: 0;
}
.tabs {
    display: flex;
    height: 14px;
    padding-top: 2px;
}
.tab {
    width: 119px;
    padding-left: 6px;
    display: flex;
    align-items: center;
    background: #303030;
    font-size: 7px;
}
.add {
    width: 12px;
    font-size: 8px;
}
.viewports {
    display: grid;
    grid-template-columns: 397fr 365fr;
    gap: 3px;
    background: #d5e2e7;
}
.viewport {
    position: relative;
    background: #fff;
    outline: 1px solid #7ba3b4;
    outline-offset: -1px;
}
.plan {
    grid-column: 1 / 3;
}
.custom {
    background: linear-gradient(#474747, #808080);
}
.front {
    background: #f0f5f0;
}
.drawing {
    width: 100%;
    height: auto;
    stroke: none;
}
.tag {
    position: absolute;
    left: 1px;
    top: 1px;
    display: flex;
    align-items: center;
    gap: 1px;
    height: 10px;
    padding: 0 8px 0 6px;
    border-radius: 5px;
    background: #79b5d9;
    color: #101820;
    font: 9px/10px "Liberation Sans", sans-serif;
    white-space: nowrap;
}
.tag svg {
    width: 7px;
    height: 7px;
    stroke: #eef;
}
.din {
    font: 500 10px "Roboto Condensed", Roboto, sans-serif;
    fill: #111;
}
.caption {
    font-size: 15px;
    fill: #9b9b9b;
}
.bim {
    font-weight: 700;
    fill: #58bdb5;
}
.handle {
    fill: #8cb8f0;
    stroke: #4573b8;
}
.cube-text {
    font: 5px Inter, sans-serif;
    fill: #2b36b8;
}
.cube-text .tiny { font-size: 3px; }
.cube-text .ax { fill: #c8443a; }
.cube-text .ay { fill: #58b848; }
/* right side */
.right {
    padding-left: 4px;
    background: var(--chrome);
    display: flex;
    flex-direction: column;
}
.ptabs {
    display: flex;
    height: 14px;
    background: var(--dark);
    padding-left: 1px;
}
.ptabs button {
    width: 14px;
    display: flex;
    align-items: center;
    justify-content: center;
    border-right: 1px solid #333;
}
.ptabs .sel {
    background: #383838;
}
.info h3 {
    height: 12px;
    line-height: 12px;
    padding-left: 1px;
    background: #333;
}
.fields {
    padding: 0 4px 0 3px;
}
.row {
    display: grid;
    grid-template-columns: 20px 1fr;
    align-items: center;
    height: 13px;
    white-space: nowrap;
}
.row.mid {
    grid-template-columns: 35px 1fr;
}
.row.far {
    grid-template-columns: 36px 1fr;
    padding-left: 6px;
}
.row.low {
    height: 11px;
}
.row input {
    width: 100%;
    height: 8px;
    padding-left: 2px;
    background: #353535;
}
.plain {
    padding-left: 2px;
}
.fields h4 {
    height: 11px;
    line-height: 11px;
    display: flex;
    align-items: center;
    gap: 4px;
    font-weight: 700;
}
.fields h4::before {
    content: "";
    width: 3px;
    height: 3px;
    margin-left: 1px;
    border: solid #999;
    border-width: 0 1px 1px 0;
    transform: rotate(45deg);
}
.fields h4::after {
    content: "";
    flex: 1;
    height: 1px;
    background: #3c3c3c;
}
.fields hr {
    border: 0;
    border-top: 1px solid #353535;
    margin: 4px 0;
}
.pushes {
    display: grid;
    gap: 2px;
    padding: 2px 0 3px;
    margin: 0 -1px;
}
.pushes button {
    height: 8px;
    background: var(--control);
    border-radius: 1px;
}
.check {
    padding: 1px 0 4px 6px;
    border-bottom: 1px solid #444;
}
.name {
    display: flex;
    align-items: center;
    height: 14px;
}
.name input {
    flex: 1;
    height: 8px;
    margin: 0 2px;
    background: #333;
}
.nav-layers {
    flex: 1;
    display: flex;
    flex-direction: column;
    background: #1c1c1c;
}
.nav-layers .ptabs {
    height: 17px;
}
.option {
    display: grid;
    grid-template-columns: 40px 1fr;
    align-items: center;
    height: 9px;
    padding: 0 2px 0 1px;
    background: var(--panel);
    white-space: nowrap;
}
.search {
    display: flex;
    align-items: center;
    gap: 4px;
    height: 10px;
    padding-left: 4px;
    background: #333;
}
.search svg {
    width: 6px;
    height: 6px;
}
table {
    flex: 1;
    display: flex;
    flex-direction: column;
    border-spacing: 0;
}
tbody {
    flex: 1;
    display: flex;
    flex-direction: column;
}
tr {
    display: grid;
    grid-template-columns: 8px 7px 8px 13px 67px 12px 1fr;
    height: 11px;
    align-items: center;
}
thead tr {
    height: 13px;
    background: #222;
}
.rest {
    flex: 1;
    height: auto;
}
th, td {
    height: 100%;
    padding: 0 0 0 2px;
    text-align: left;
    white-space: nowrap;
    border-right: 1px solid #303030;
    display: flex;
    align-items: center;
    overflow: hidden;
}
th {
    font-weight: 600;
}
th:first-child {
    grid-column: 1 / 4;
}
td:nth-child(n+4) {
    border-color: transparent;
}
td:first-child {
    padding: 0;
}
td svg {
    width: 8px;
    height: 8px;
}
.status {
    height: 13px;
    display: flex;
    align-items: center;
    gap: 5px;
    padding: 0 55px 0 3px;
    border-top: 1px solid #1c1c1c;
}
.pos {
    width: 29px;
    white-space: nowrap;
    margin-left: 40px;
}
.pos.first {
    margin-left: auto;
    width: 36px;
}
```
